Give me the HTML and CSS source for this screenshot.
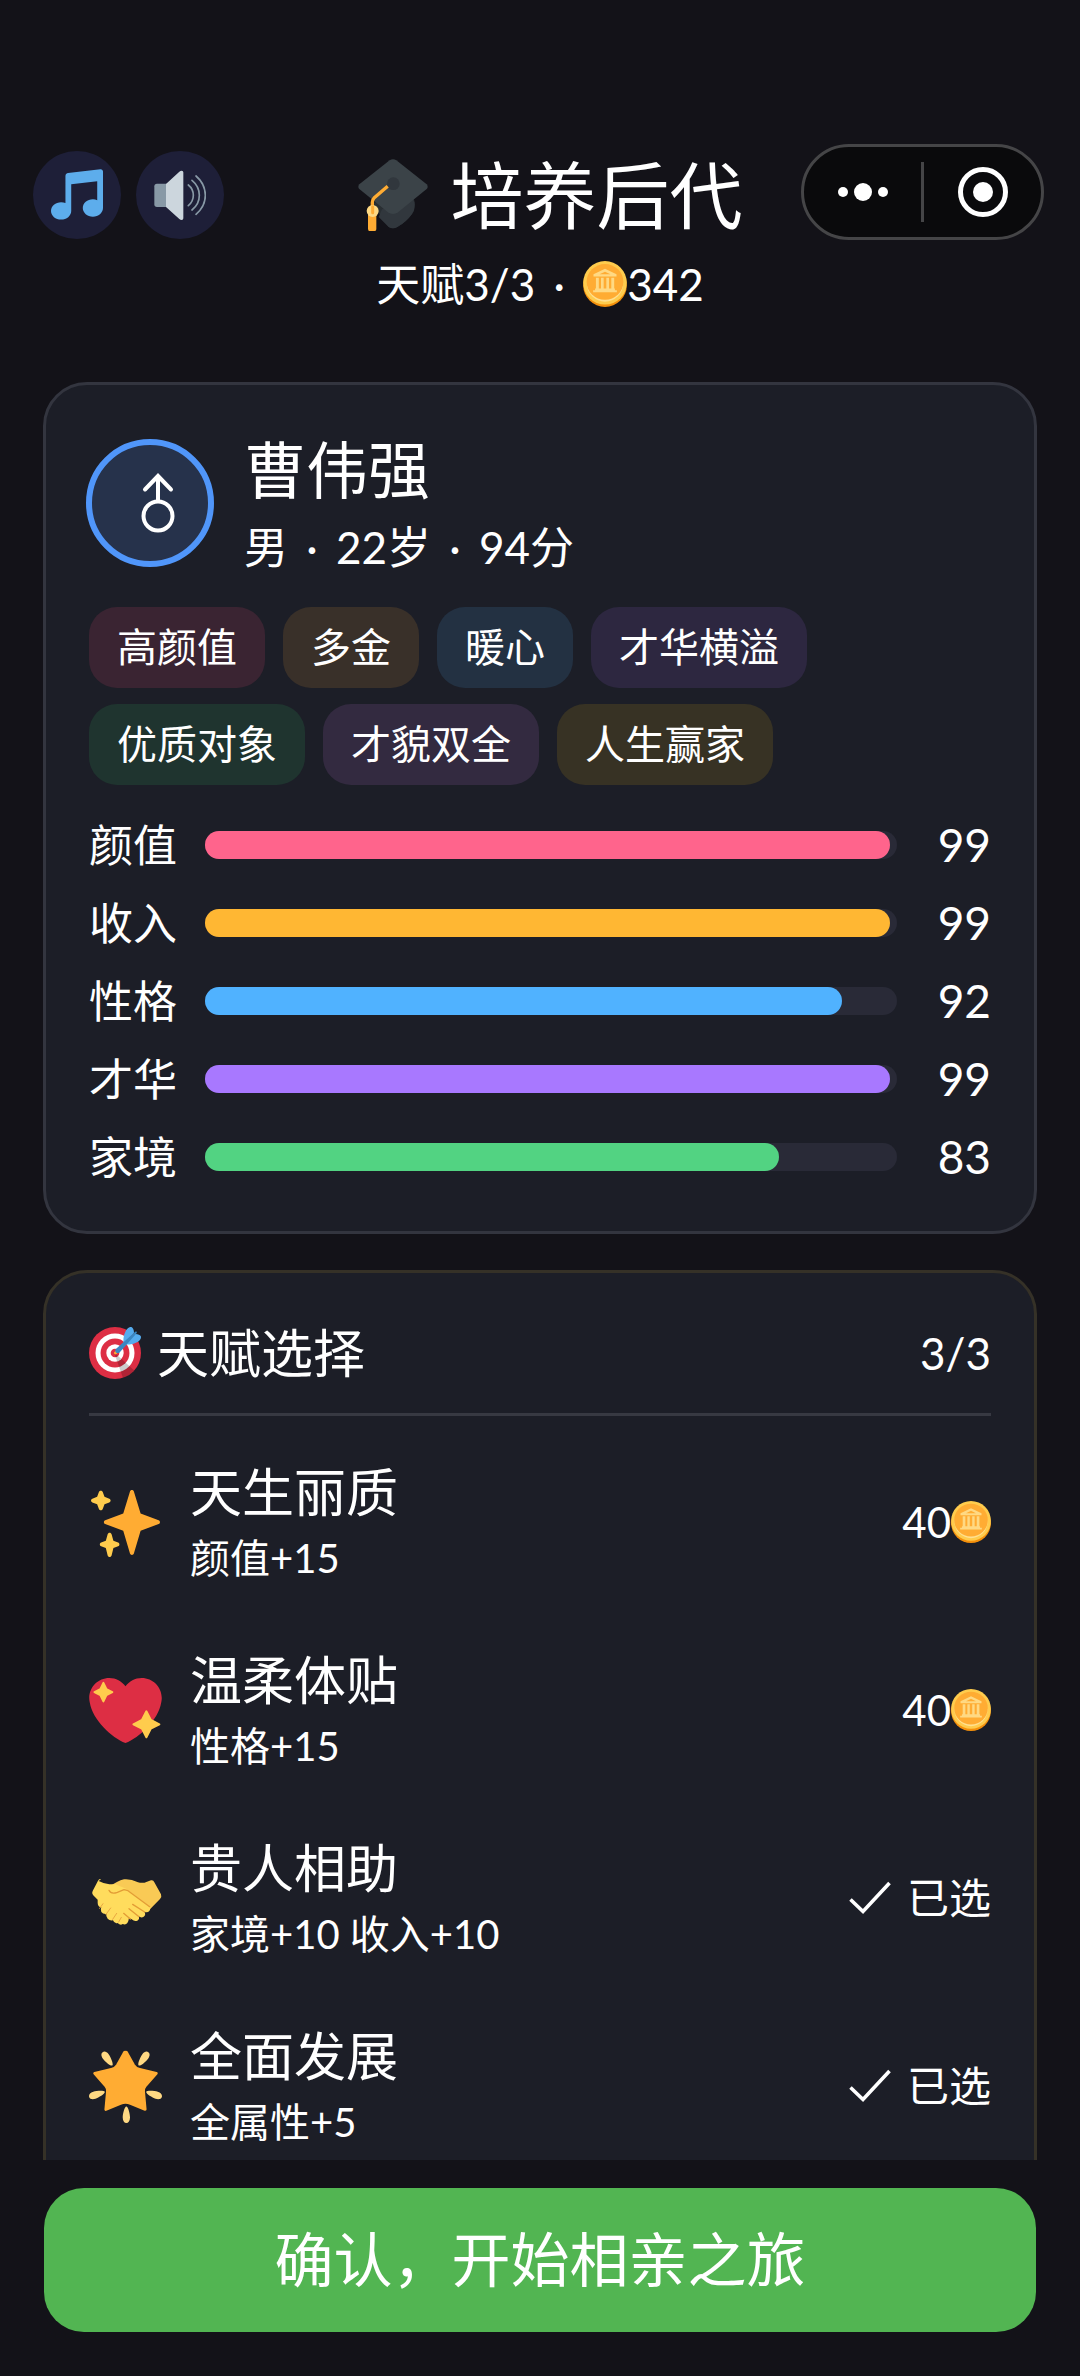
FILE: index.html
```html
<!DOCTYPE html>
<html lang="zh-CN">
<head>
<meta charset="utf-8">
<meta name="viewport" content="width=device-width, initial-scale=1">
<title>培养后代</title>
<link rel="stylesheet" href="styles.css">
</head>
<body>
<svg class="defs" aria-hidden="true">
  <symbol id="coin" viewBox="0 0 36 38">
    <ellipse cx="18" cy="20" rx="18" ry="18" fill="#f4900c"/>
    <circle cx="18" cy="18" r="18" fill="#ffcc4d"/>
    <circle cx="18" cy="18.600" r="15" fill="#ffe08f"/>
    <ellipse cx="18" cy="17.300" rx="15.200" ry="14.800" fill="#ffac33"/>
    <path fill="#ffd983" d="M18 6.500 27.500 11v1.800h-19V11zM10.500 13.800h2.400v9h-2.400zM14.700 13.800h2.200v9h-2.200zM19.100 13.800h2.200v9h-2.200zM23.200 13.800h2.400v9h-2.400zM9.800 22.800h16.400v1.400h1.600v1.600H8.200v-1.600h1.600z"/>
    <path fill="#ffac33" d="M18 8.800 22.500 11h-9z"/>
  </symbol>
  <symbol id="check" viewBox="0 0 42 34">
    <path d="M1.500 18.500 14 30.500 40.500 2" fill="none" stroke="#fff" stroke-width="3.600"/>
  </symbol>
</svg>

<header class="header">
  <div class="header-row">
    <div class="sound">
      <button class="round" type="button" aria-label="音乐">
        <svg viewBox="0 0 36 36"><path fill="#5dadec" d="M34.209.206L11.791 2.793C10.806 2.907 10 3.811 10 4.803v18.782C9.09 23.214 8.075 23 7 23c-3.865 0-7 2.685-7 6 0 3.314 3.135 6 7 6s7-2.686 7-6V10.539l18-2.077v13.124c-.91-.372-1.925-.586-3-.586-3.865 0-7 2.685-7 6 0 3.314 3.135 6 7 6s7-2.686 7-6V1.803c0-.992-.806-1.710-1.791-1.597z"/></svg>
      </button>
      <button class="round" type="button" aria-label="音效">
        <svg viewBox="462 147 156 156">
          <path fill="#8899a6" d="M471 191h30v70h-30q-8 0-8-8v-54q0-8 8-8z"/>
          <path fill="#ccd6dd" d="M498 192l40-37q3-3 7-3 5 0 5 5v138q0 5-5 5-4 0-7-3l-40-36z"/>
          <path fill="none" stroke="#8899a6" stroke-width="5" stroke-linecap="round" d="M565 195q15 12 15 31t-15 31M576 181q22 18 22 45t-22 44M588 168q28 24 28 58t-28 57"/>
        </svg>
      </button>
    </div>
    <h1 class="title">
      <svg class="title-icon" viewBox="75 119 216 216" aria-hidden="true">
        <path fill="#292f33" d="M118 250l118-16q12 4 12 16v14q0 10-8 20-18 25-44 39-13 8-26 0z"/>
        <path fill="#31373d" d="M150 270l85-34q13 4 13 20 0 15-8 28-18 25-44 39-13 8-26 0l-30-30z"/>
        <path fill="#3b4348" d="M173 123q10-6 20 0l91 72q6 7 0 14l-86 70q-15 10-30 0l-86-70q-6-7 0-14z"/>
        <circle cx="184" cy="193" r="19" fill="#31373d"/>
        <path d="M167 201l-40 34q-6 6-6 14v22" fill="none" stroke="#ffac33" stroke-width="10"/>
        <path fill="#ffac33" d="M108 280h25v48q0 8-8 8h-9q-8 0-8-8z"/>
        <circle cx="122" cy="275" r="18" fill="#ffd983"/>
        <path d="M122 262v18" stroke="#ffac33" stroke-width="9" stroke-linecap="round"/>
      </svg><span>培养后代</span>
    </h1>
    <div class="capsule">
      <button type="button" aria-label="更多"><svg viewBox="0 0 50 18" width="50" height="18"><circle cx="5" cy="9" r="5"/><circle cx="25" cy="9" r="9"/><circle cx="45" cy="9" r="5"/></svg></button>
      <button type="button" aria-label="关闭"><svg viewBox="0 0 50 50" width="50" height="50"><circle cx="25" cy="25" r="22.500" fill="none" stroke="#fff" stroke-width="5"/><circle cx="25" cy="25" r="10"/></svg></button>
    </div>
  </div>
  <p class="subtitle">天赋3/3<span class="dot">·</span><svg class="coin-large" aria-label="金币"><use href="#coin"/></svg>342</p>
</header>

<main class="content">
  <section class="card">
    <div class="person">
      <div class="avatar">
        <svg viewBox="0 0 116 116" aria-hidden="true"><g fill="none" stroke="#fff" stroke-width="4" stroke-linecap="round"><circle cx="66" cy="71" r="14.500"/><path d="M66 56V32M53 44.500 66 31 79 44.500"/></g></svg>
      </div>
      <div>
        <h2 class="name">曹伟强</h2>
        <p class="meta">男<span class="dot">·</span>22岁<span class="dot">·</span>94分</p>
      </div>
    </div>
    <ul class="tags">
      <li class="tag rose">高颜值</li>
      <li class="tag amber">多金</li>
      <li class="tag blue">暖心</li>
      <li class="tag violet">才华横溢</li>
      <li class="tag green">优质对象</li>
      <li class="tag plum">才貌双全</li>
      <li class="tag gold">人生赢家</li>
    </ul>
    <dl class="stats">
      <div class="stat"><dt>颜值</dt><dd class="track"><span class="fill looks" style="width:99%"></span></dd><dd class="value">99</dd></div>
      <div class="stat"><dt>收入</dt><dd class="track"><span class="fill income" style="width:99%"></span></dd><dd class="value">99</dd></div>
      <div class="stat"><dt>性格</dt><dd class="track"><span class="fill temper" style="width:92%"></span></dd><dd class="value">92</dd></div>
      <div class="stat"><dt>才华</dt><dd class="track"><span class="fill talent-bar" style="width:99%"></span></dd><dd class="value">99</dd></div>
      <div class="stat"><dt>家境</dt><dd class="track"><span class="fill family" style="width:83%"></span></dd><dd class="value">83</dd></div>
    </dl>
  </section>

  <section class="card talents">
    <div class="talents-head">
      <svg class="target" viewBox="0 0 36 36" aria-hidden="true">
        <circle fill="#dd2e44" cx="18" cy="18" r="18"/><circle fill="#fff" cx="18" cy="18" r="13.500"/><circle fill="#dd2e44" cx="18" cy="18" r="10"/><circle fill="#fff" cx="18" cy="18" r="6"/><circle fill="#dd2e44" cx="18" cy="18" r="3"/>
        <path opacity=".2" d="M18.240 18.282l13.144 11.754s-2.647 3.376-7.890 5.109L17.579 18.420l.661-.138z"/>
        <path fill="#ffac33" d="M18.294 19c-.255 0-.509-.097-.704-.292-.389-.389-.389-1.018 0-1.407l.563-.563c.389-.389 1.018-.389 1.408 0 .388.389.388 1.018 0 1.407l-.564.563c-.194.195-.448.292-.703.292z"/>
        <path fill="#55acee" d="M24.016 6.981c-.403 2.079 0 4.691 0 4.691l7.054-7.388c.291-1.454-.528-3.932-1.718-4.238-1.190-.306-4.079.803-5.336 6.935zm5.003 5.003c-2.079.403-4.691 0-4.691 0l7.388-7.054c1.454-.291 3.932.528 4.238 1.718.306 1.190-.803 4.079-6.935 5.336z"/>
        <path fill="#3a87c2" d="M32.798 4.485L21.176 17.587c-.362.362-1.673.882-2.510.046-.836-.836-.419-2.080-.057-2.443L31.815 3.501s.676-.635 1.159-.152-.176 1.136-.176 1.136z"/>
      </svg>
      <h2>天赋选择</h2>
      <span class="count">3/3</span>
    </div>
    <ul class="talent-list">
      <li><button class="talent" type="button" aria-pressed="false">
        <svg class="emoji" viewBox="0 0 36 36" aria-hidden="true">
          <path fill="#ffac33" d="M34.347 16.893l-8.899-3.294-3.323-10.891c-.128-.42-.517-.708-.956-.708-.439 0-.828.288-.956.708l-3.322 10.891-8.900 3.294c-.393.146-.653.519-.653.938 0 .418.260.793.653.938l8.895 3.293 3.324 11.223c.126.424.516.715.959.715.442 0 .833-.291.959-.716l3.324-11.223 8.896-3.293c.391-.144.652-.518.652-.937 0-.418-.261-.792-.653-.938z"/>
          <path fill="#ffcc4d" d="M14.347 27.894l-2.314-.856-.9-3.300c-.118-.436-.513-.738-.964-.738-.451 0-.846.302-.965.737l-.9 3.300-2.313.856c-.393.146-.653.520-.653.938 0 .418.260.793.653.938l2.301.853.907 3.622c.112.444.511.756.970.756.459 0 .858-.312.970-.757l.907-3.622 2.301-.853c.393-.144.653-.519.653-.937 0-.418-.260-.793-.653-.937zM10.009 6.231l-2.364-.875-.876-2.365c-.145-.393-.519-.653-.938-.653-.418 0-.792.260-.938.653l-.875 2.365-2.365.875c-.393.146-.653.520-.653.938 0 .418.260.793.653.938l2.365.875.875 2.365c.146.393.520.653.938.653.418 0 .792-.260.938-.653l.875-2.365 2.365-.875c.393-.146.653-.520.653-.938 0-.418-.260-.792-.653-.938z"/>
        </svg>
        <span class="talent-text"><span class="talent-name">天生丽质</span><span class="talent-effect">颜值+15</span></span>
        <span class="talent-state">40<svg class="coin-small" aria-label="金币"><use href="#coin"/></svg></span>
      </button></li>
      <li><button class="talent" type="button" aria-pressed="false">
        <svg class="emoji" viewBox="0 0 36 36" aria-hidden="true">
          <path fill="#dd2e44" d="M35.885 11.833c0-5.450-4.418-9.868-9.867-9.868-3.308 0-6.227 1.633-8.018 4.129-1.791-2.496-4.710-4.129-8.017-4.129-5.450 0-9.868 4.417-9.868 9.868 0 .772.098 1.520.266 2.241C1.751 22.587 11.216 31.568 18 34.034c6.783-2.466 16.249-11.447 17.617-19.959.170-.721.268-1.469.268-2.242z"/>
          <path fill="#ffcc4d" stroke="#ffcc4d" stroke-linejoin="round" d="M7.100 4.400 8.600 7.500 11.500 8.900 8.600 10.400 7.100 13.500 5.600 10.400 2.700 8.900 5.600 7.500zM28.300 18.400 30.500 22.700 34.700 24.800 30.500 26.900 28.300 31.200 26.100 26.900 21.900 24.800 26.100 22.700z"/>
        </svg>
        <span class="talent-text"><span class="talent-name">温柔体贴</span><span class="talent-effect">性格+15</span></span>
        <span class="talent-state">40<svg class="coin-small" aria-label="金币"><use href="#coin"/></svg></span>
      </button></li>
      <li><button class="talent" type="button" aria-pressed="true">
        <svg class="emoji" viewBox="177 665 219 219" aria-hidden="true">
          <path fill="#f9ca55" d="M237 740q25-18 45-23 20-2 42 9 15 4 27-2l12-4q7-2 10 6l20 36q3 8-3 14l-33 34-60 10-50-50z"/>
          <path fill="#ffdc5d" d="M206 722q15 8 32 10l18 0 34 14 66 50q8 8 2 16-6 6-15 2 6 9-2 15-7 5-15-1 4 9-4 13-8 4-17-4l-8-5q-1 10-5 16-5 7-14 3-7 5-15-3-10 3-14-8-10 2-16-5-6-6-4-14-10 1-15-6-4-8 0-14-11-2-11-14l0-9-14-14q-5-4-1-12l16-31q4-7 9-4z"/>
          <path fill="none" stroke="#e39d36" stroke-width="4" stroke-linecap="round" stroke-linejoin="round" d="M237 750q6 13 25 6l20-8 12 3 65 48M308 792l36 23M297 805l30 24M281 819l20 17"/>
          <path fill="none" stroke="#e9a842" stroke-width="3" stroke-linecap="round" d="M209 804l10-14M228 822l14-19M248 837l12-18M266 845l8-14"/>
        </svg>
        <span class="talent-text"><span class="talent-name">贵人相助</span><span class="talent-effect">家境+10 收入+10</span></span>
        <span class="talent-state"><svg class="check" aria-hidden="true"><use href="#check"/></svg>已选</span>
      </button></li>
      <li><button class="talent" type="button" aria-pressed="true">
        <svg class="emoji" viewBox="0 0 36 36" aria-hidden="true">
          <path fill="#ffac33" stroke="#ffac33" stroke-width="1.400" stroke-linejoin="round" d="M18 1.200Q18.400 .9 18.700 1.600L22 7.500Q23.200 9.300 25 9.600L33.200 11.500 27.900 17.500Q26.700 19 26.900 20.500L27.700 29.300 20.500 26.300Q18 25.300 15.500 26.300L8.300 29.300 9.100 20.500Q9.300 19 8.100 17.500L2.800 11.500 11 9.600Q12.800 9.300 14 7.500L17.300 1.600Q17.600 .9 18 1.200z"/>
          <path fill="#ffd983" d="M9.783 2.181c1.023 1.413 2.446 4.917 1.717 5.447-.728.531-3.607-1.910-4.630-3.323-1.022-1.413-.935-2.668-.131-3.254.804-.587 2.020-.282 3.044 1.130zm19.348 2.124C28.109 5.718 25.230 8.160 24.500 7.627c-.729-.530.695-4.033 1.719-5.445C27.242.768 28.457.463 29.262 1.051c.803.586.890 1.841-.131 3.254zM16.625 33.291c-.001-1.746.898-5.421 1.801-5.421.897 0 1.798 3.675 1.797 5.420 0 1.747-.804 2.712-1.800 2.710-.994.002-1.798-.962-1.798-2.709zm16.179-9.262c-1.655-.539-4.858-2.533-4.579-3.395.277-.858 4.037-.581 5.690-.041 1.655.540 2.321 1.605 2.013 2.556-.308.950-1.469 1.420-3.124.880zM2.083 20.594c1.655-.540 5.414-.817 5.694.044.276.857-2.928 2.854-4.581 3.392-1.654.540-2.818.070-3.123-.880-.308-.950.354-2.015 2.010-2.556z"/>
        </svg>
        <span class="talent-text"><span class="talent-name">全面发展</span><span class="talent-effect">全属性+5</span></span>
        <span class="talent-state"><svg class="check" aria-hidden="true"><use href="#check"/></svg>已选</span>
      </button></li>
    </ul>
  </section>
</main>

<footer class="footer">
  <button class="confirm" type="button">确认，开始相亲之旅</button>
</footer>
</body>
</html>
```
FILE: styles.css
```css
* {
  box-sizing: border-box;
  margin: 0;
  padding: 0;
}

body {
  display: flex;
  flex-direction: column;
  height: 100vh;
  overflow: hidden;
  background: #131218;
  color: #fff;
  font-family: Lato, "Noto Sans CJK SC", sans-serif;
  font-size: 44px;
  font-weight: 400;
}

h1,
h2 {
  font-weight: 400;
}

ul {
  list-style: none;
}

button {
  border: 0;
  background: none;
  color: inherit;
  font: inherit;
  cursor: pointer;
}

.defs {
  position: absolute;
  width: 0;
  height: 0;
}

/* Header */
.header {
  flex: none;
  padding: 144px 0 64px;
}

.header-row {
  display: grid;
  grid-template-columns: 1fr auto 1fr;
  align-items: center;
  height: 102px;
  padding: 0 36px 0 33px;
}

.sound {
  display: flex;
  gap: 15px;
}

.round {
  display: grid;
  place-items: center;
  width: 88px;
  height: 88px;
  border-radius: 50%;
  background: #1e1f38;
}

.round svg {
  width: 52px;
  height: 52px;
}

.title {
  display: flex;
  align-items: center;
  font-size: 73px;
  line-height: 94px;
}

.title-icon {
  width: 72px;
  height: 72px;
  margin: 0 22px;
}

.capsule {
  display: flex;
  justify-self: end;
  align-self: start;
  align-items: center;
  width: 243px;
  height: 96px;
  border: 3px solid #454547;
  border-radius: 48px;
  background: #0a0a0c;
}

.capsule button {
  display: grid;
  flex: 1;
  place-items: center;
  height: 60px;
}

.capsule button + button {
  border-left: 3px solid #454547;
}

.capsule svg {
  fill: #fff;
}

.subtitle {
  display: flex;
  align-items: center;
  justify-content: center;
  padding-top: 4px;
  line-height: 68px;
}

.dot {
  display: inline-block;
  width: 48px;
  text-align: center;
}

.coin-large {
  width: 44px;
  height: 46px;
}

/* Cards */
.content {
  flex: 1;
  min-height: 0;
  overflow-y: auto;
  padding: 0 43px;
  scrollbar-width: none;
}

.card {
  padding: 43px;
  border: 3px solid #33353f;
  border-radius: 44px;
  background: #1c1e27;
}

.person {
  display: flex;
  align-items: center;
  gap: 30px;
}

.avatar {
  width: 128px;
  height: 128px;
  margin: 0 0 4px -3px;
  border: 6px solid #5096fa;
  border-radius: 50%;
  background: #26324b;
}

.avatar svg {
  display: block;
}

.name {
  font-size: 62px;
  line-height: 84px;
}

.meta {
  line-height: 70px;
}

.tags {
  display: flex;
  flex-wrap: wrap;
  gap: 16px 18px;
  margin-top: 25px;
}

.tag {
  padding: 16px 28px;
  border-radius: 28px;
  font-size: 40px;
  line-height: 49px;
}

.rose { background: #3a2432; }
.amber { background: #393029; }
.blue { background: #233142; }
.violet { background: #2d2740; }
.green { background: #1f342f; }
.plum { background: #332a40; }
.gold { background: #373224; }

.stats {
  display: grid;
  gap: 16px;
  margin-top: 29px;
}

.stat {
  display: flex;
  align-items: center;
  gap: 28px;
  line-height: 62px;
}

.track {
  flex: 1;
  height: 28px;
  border-radius: 14px;
  background: #292a37;
}

.fill {
  display: block;
  height: 28px;
  border-radius: 14px;
}

.looks { background: #ff648c; }
.income { background: #ffb733; }
.temper { background: #50b2ff; }
.talent-bar { background: #a878ff; }
.family { background: #52d382; }

.value {
  width: 66px;
  font-size: 46px;
  text-align: right;
}

/* Talents */
.talents {
  margin-top: 36px;
  border-color: #353127;
}

.talents-head {
  display: flex;
  align-items: center;
  padding-bottom: 23px;
  border-bottom: 3px solid #373942;
  line-height: 74px;
}

.talents-head h2 {
  flex: 1;
  font-size: 52px;
}

.target {
  width: 52px;
  height: 52px;
  margin-right: 16px;
}

.count {
  font-size: 44px;
}

.talent-list {
  padding-top: 12px;
}

.talent {
  display: flex;
  align-items: center;
  width: 100%;
  padding: 28px 0;
  text-align: left;
}

.emoji {
  width: 73px;
  height: 73px;
  margin-right: 28px;
}

.talent-text {
  display: flex;
  flex: 1;
  flex-direction: column;
}

.talent-name {
  font-size: 52px;
  line-height: 72px;
}

.talent-effect {
  font-size: 40px;
  line-height: 60px;
}

.talent-state {
  display: flex;
  align-items: center;
  font-size: 42px;
  line-height: 60px;
}

.coin-small {
  width: 40px;
  height: 42px;
}

.check {
  width: 42px;
  height: 34px;
  margin-right: 16px;
}

/* Footer */
.footer {
  flex: none;
  padding: 28px 44px 44px;
}

.confirm {
  width: 100%;
  height: 144px;
  padding-bottom: 8px;
  border-radius: 40px;
  background: #52b552;
  font-size: 59px;
}
```
